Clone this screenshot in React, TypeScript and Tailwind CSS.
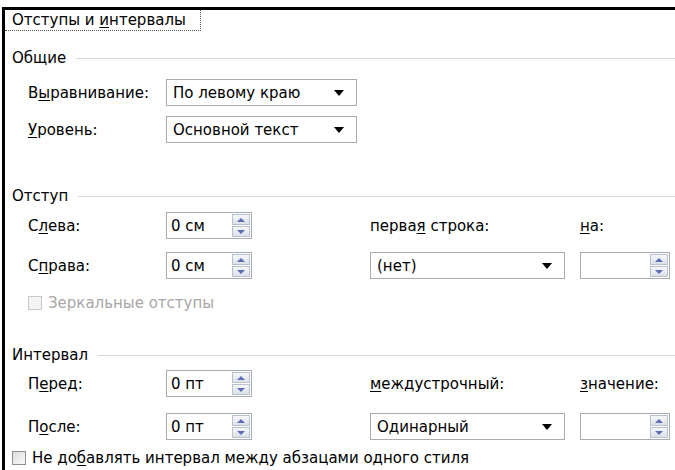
import type { ReactNode } from 'react';

const font = "font-['DejaVu_Sans','Liberation_Sans',sans-serif]";

// access-key letter
const K = ({ children }: { children: ReactNode }) => (
  <span className="underline underline-offset-2">{children}</span>
);

const GroupHeader = ({ children }: { children: ReactNode }) => (
  <div className="flex items-center gap-[10px] h-4">
    <span>{children}</span>
    <div className="flex-1 h-px bg-[#cfd9e2]" />
  </div>
);

const Dropdown = ({ value, width }: { value: string; width: string }) => (
  <div
    className={`${width} h-[27px] border border-[#a9adb3] bg-white flex items-center justify-between pl-[6px] pr-[12px]`}
  >
    <span>{value}</span>
    <svg width="10" height="6" viewBox="0 0 10 6">
      <path d="M0 0H10L5 6Z" fill="#000" />
    </svg>
  </div>
);

const SpinArrow = ({ up }: { up?: boolean }) => (
  <div className="flex-1 flex items-center justify-center border border-[#b9c1cc] bg-gradient-to-b from-[#f6f7f9] to-[#dde1e8]">
    <svg width="8" height="4" viewBox="0 0 8 4">
      <path d={up ? 'M0 4H8L4 0Z' : 'M0 0H8L4 4Z'} fill="#5b6fb8" />
    </svg>
  </div>
);

const Spin = ({ value, width }: { value?: string; width: string }) => (
  <div className={`${width} h-[27px] border border-[#a9adb3] bg-white flex items-stretch`}>
    <div className="flex-1 flex items-center pl-[4px]">{value}</div>
    <div className="w-[19px] flex flex-col gap-px py-[1px] pr-[1px]">
      <SpinArrow up />
      <SpinArrow />
    </div>
  </div>
);

const Checkbox = ({ disabled }: { disabled?: boolean }) => (
  <div
    className={`w-[14px] h-[14px] border ${
      disabled ? 'border-[#c9c9c9] bg-[#f4f4f4]' : 'border-[#8e8f8f] bg-gradient-to-br from-[#dcdcdc] to-[#fbfbfb]'
    }`}
  />
);

export default function App() {
  return (
    <div className={`w-[675px] h-[470px] bg-white overflow-hidden text-[15px] leading-4 text-black ${font}`}>
      <div className="mt-[7px] ml-[2px] h-[463px] border-t-[3px] border-l-[3px] border-black">
        {/* tab caption with focus rectangle */}
        <div className="w-[196px] h-[21px] border-r border-b border-dotted border-[#555] pl-[7px] pt-[1px] leading-[18px]">
          Отступы и <K>и</K>нтервалы
        </div>

        <div className="pl-[7px] flex flex-col">
          <div className="mt-[19px]">
            <GroupHeader>Общие</GroupHeader>
          </div>

          <div className="pl-[16px] mt-[13px] flex flex-col gap-[10px]">
            <div className="flex items-center">
              <span className="w-[138px]">
                В<K>ы</K>равнивание:
              </span>
              <Dropdown value="По левому краю" width="w-[191px]" />
            </div>
            <div className="flex items-center">
              <span className="w-[138px]">
                <K>У</K>ровень:
              </span>
              <Dropdown value="Основной текст" width="w-[191px]" />
            </div>
          </div>

          <div className="mt-[45px]">
            <GroupHeader>Отступ</GroupHeader>
          </div>

          <div className="pl-[16px] mt-[8px] flex flex-col gap-[13px]">
            <div className="flex items-center">
              <span className="w-[138px]">
                С<K>л</K>ева:
              </span>
              <Spin value="0 см" width="w-[86px]" />
              <span className="ml-[118px] w-[210px]">
                перва<K>я</K> строка:
              </span>
              <span>
                <K>н</K>а:
              </span>
            </div>
            <div className="flex items-center">
              <span className="w-[138px]">
                С<K>п</K>рава:
              </span>
              <Spin value="0 см" width="w-[86px]" />
              <div className="ml-[118px]">
                <Dropdown value="(нет)" width="w-[195px]" />
              </div>
              <div className="ml-[15px]">
                <Spin width="w-[90px]" />
              </div>
            </div>
          </div>

          <div className="pl-[16px] mt-[16px] h-4 flex items-center gap-[6px] text-[#a7a7a7]">
            <Checkbox disabled />
            <span>Зеркальные отступы</span>
          </div>

          <div className="mt-[36px]">
            <GroupHeader>Интервал</GroupHeader>
          </div>

          <div className="pl-[16px] mt-[7px] flex flex-col gap-[16px]">
            <div className="flex items-center">
              <span className="w-[138px]">
                П<K>е</K>ред:
              </span>
              <Spin value="0 пт" width="w-[86px]" />
              <span className="ml-[118px] w-[210px]">
                <K>м</K>еждустрочный:
              </span>
              <span>
                <K>з</K>начение:
              </span>
            </div>
            <div className="flex items-center">
              <span className="w-[138px]">
                П<K>о</K>сле:
              </span>
              <Spin value="0 пт" width="w-[86px]" />
              <div className="ml-[118px]">
                <Dropdown value="Одинарный" width="w-[195px]" />
              </div>
              <div className="ml-[15px]">
                <Spin width="w-[90px]" />
              </div>
            </div>
          </div>

          <div className="mt-[10px] h-4 flex items-center gap-[6px]">
            <Checkbox />
            <span>
              Не до<K>б</K>авлять интервал между абзацами одного стиля
            </span>
          </div>
        </div>
      </div>
    </div>
  );
}
